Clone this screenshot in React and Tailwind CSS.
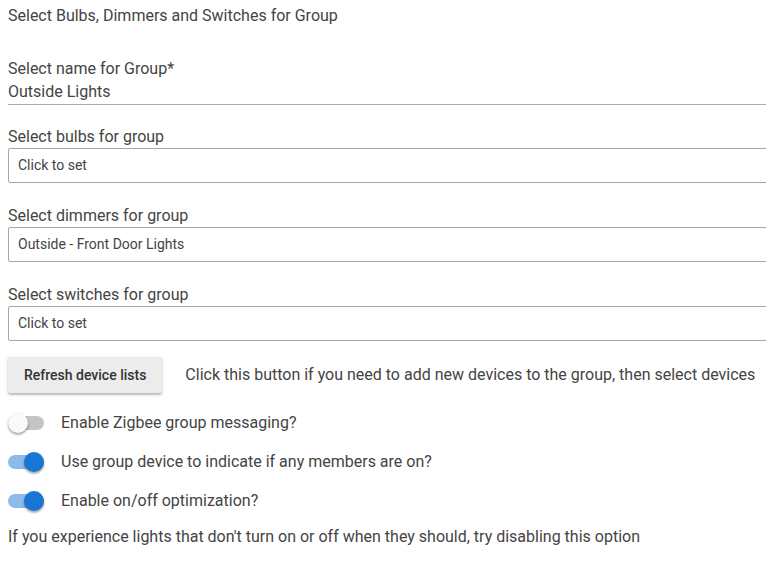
import React from "react";

function Switch({ on }) {
  return (
    <div className="relative w-[36px] h-[20px] shrink-0 flex items-center">
      <div
        className={
          "w-[36px] h-[14px] rounded-full " +
          (on ? "bg-[#8dbbe9]" : "bg-[#c4c4c4]")
        }
      />
      <div
        className={
          "absolute top-0 w-[20px] h-[20px] rounded-full shadow-[0_2px_2px_rgba(0,0,0,0.24),0_1px_3px_rgba(0,0,0,0.18)] " +
          (on ? "left-[16px] bg-[#1976d2]" : "left-0 bg-[#fafafa]")
        }
      />
    </div>
  );
}

function SelectBox({ label, value, first }) {
  return (
    <div className={first ? "mt-[20px]" : "mt-[21px]"}>
      <div className="text-[16px] leading-[23px]">{label}</div>
      <div className="w-[790px] h-[35px] border border-[#a6a6a6] rounded-[2px] flex items-center pl-[9px] text-[14px]">
        {value}
      </div>
    </div>
  );
}

export default function App() {
  return (
    <div
      className="w-full h-[566px] overflow-hidden bg-white text-[#444444]"
      style={{ fontFamily: "Roboto, 'Liberation Sans', sans-serif" }}
    >
      <div className="px-[8px] pt-[4px]">
        <div className="text-[16px] leading-[23px]">
          Select Bulbs, Dimmers and Switches for Group
        </div>
        <div className="mt-[30px] w-[790px] border-b border-[#ababab]">
          <div className="text-[16px] leading-[23px]">Select name for Group*</div>
          <div className="text-[16px] leading-[23px] pb-px">Outside Lights</div>
        </div>
        <SelectBox first label="Select bulbs for group" value="Click to set" />
        <SelectBox label="Select dimmers for group" value="Outside - Front Door Lights" />
        <SelectBox label="Select switches for group" value="Click to set" />
        <div className="mt-[16px] flex items-center">
          <button className="h-[36px] px-[16px] bg-[#ececec] rounded-[2px] text-[14px] font-medium text-[#333333] shadow-[0_2px_2px_rgba(0,0,0,0.2),0_1px_4px_rgba(0,0,0,0.12)]">
            Refresh device lists
          </button>
          <div className="ml-[23px] text-[16px] whitespace-nowrap">
            Click this button if you need to add new devices to the group, then select devices
          </div>
        </div>
        <div className="mt-[10px]">
          <div className="h-[39px] flex items-center">
            <Switch on={false} />
            <span className="ml-[17px] text-[16px]">Enable Zigbee group messaging?</span>
          </div>
          <div className="h-[39px] flex items-center">
            <Switch on={true} />
            <span className="ml-[17px] text-[16px]">
              Use group device to indicate if any members are on?
            </span>
          </div>
          <div className="h-[39px] flex items-center">
            <Switch on={true} />
            <span className="ml-[17px] text-[16px]">Enable on/off optimization?</span>
          </div>
        </div>
        <div className="mt-[5px] text-[16px] leading-[23px]">
          If you experience lights that don't turn on or off when they should, try disabling this option
        </div>
      </div>
    </div>
  );
}
